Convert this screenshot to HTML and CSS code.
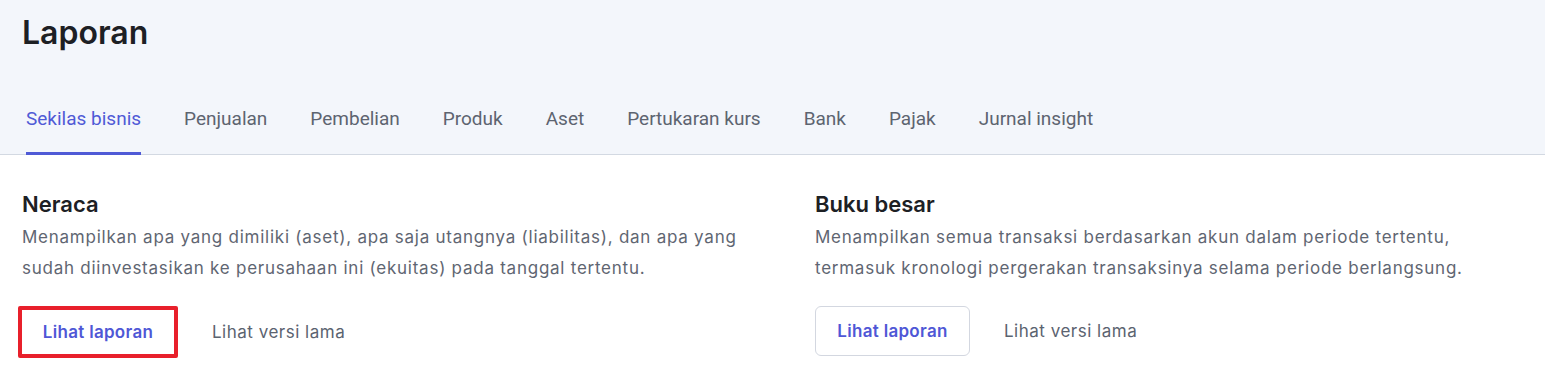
FILE: index.html
```html
<!DOCTYPE html>
<html lang="id">
<head>
    <meta charset="UTF-8">
    <meta name="viewport" content="width=device-width, initial-scale=1.0">
    <title>Laporan</title>
    <link rel="stylesheet" href="styles.css">
</head>
<body>
    <div class="header">
        <h1 class="title">Laporan</h1>
        <div class="tabs">
            <a class="tab active" href="#">Sekilas bisnis</a>
            <a class="tab" href="#">Penjualan</a>
            <a class="tab" href="#">Pembelian</a>
            <a class="tab" href="#">Produk</a>
            <a class="tab" href="#">Aset</a>
            <a class="tab" href="#">Pertukaran kurs</a>
            <a class="tab" href="#">Bank</a>
            <a class="tab" href="#">Pajak</a>
            <a class="tab" href="#">Jurnal insight</a>
        </div>
    </div>

    <div class="reports">
        <div class="report">
            <h2 class="report-title">Neraca</h2>
            <p class="report-desc">Menampilkan apa yang dimiliki (aset), apa saja utangnya (liabilitas), dan apa yang sudah diinvestasikan ke perusahaan ini (ekuitas) pada tanggal tertentu.</p>
            <div class="actions">
                <button class="btn marked">Lihat laporan</button>
                <a class="link" href="#">Lihat versi lama</a>
            </div>
        </div>
        <div class="report">
            <h2 class="report-title">Buku besar</h2>
            <p class="report-desc">Menampilkan semua transaksi berdasarkan akun dalam periode tertentu, termasuk kronologi pergerakan transaksinya selama periode berlangsung.</p>
            <div class="actions">
                <button class="btn">Lihat laporan</button>
                <a class="link" href="#">Lihat versi lama</a>
            </div>
        </div>
    </div>
</body>
</html>
```

FILE: styles.css
```css
* {
    box-sizing: border-box;
    margin: 0;
    padding: 0;
}

body {
    font-family: Inter, "Noto Sans", sans-serif;
    background-color: #ffffff;
    color: #1f2328;
}

.header {
    background-color: #f3f6fb;
    padding: 14px 22px 0;
    border-bottom: 1px solid #d3d9e2;
}

.title {
    font-size: 32px;
    font-weight: 600;
    line-height: 38px;
    color: #1d2024;
}

.tabs {
    display: flex;
    gap: 43px;
    margin-top: 55px;
    padding-left: 4px;
}

.tab {
    font-family: Roboto, sans-serif;
    font-size: 19px;
    line-height: 24px;
    color: #5d6470;
    text-decoration: none;
    padding-bottom: 21px;
    border-bottom: 3px solid transparent;
    margin-bottom: -1px;
}

.tab.active {
    color: #4f5ad6;
    border-bottom-color: #4f5ad6;
}

.reports {
    display: grid;
    grid-template-columns: 793px 1fr;
    padding: 34px 22px 0;
}

.report-title {
    font-size: 22px;
    font-weight: 600;
    line-height: 30px;
    color: #1d2024;
}

.report-desc {
    margin-top: 3px;
    font-size: 17px;
    letter-spacing: 0.75px;
    line-height: 31px;
    color: #5f6672;
    max-width: 717px;
}

.actions {
    display: flex;
    align-items: center;
    gap: 34px;
    margin-top: 22px;
}

.btn {
    width: 155px;
    height: 50px;
    font-family: Inter, sans-serif;
    font-size: 17px;
    letter-spacing: 0.3px;
    font-weight: 600;
    color: #4f57d6;
    background-color: #ffffff;
    border: 1px solid #d3d7e0;
    border-radius: 6px;
    cursor: pointer;
}

.btn.marked {
    width: 160px;
    height: 52px;
    margin-left: -4px;
    border: 4px solid #e8202b;
    border-radius: 2px;
}

.link {
    font-size: 17px;
    letter-spacing: 0.5px;
    color: #5b6370;
    text-decoration: none;
}
```
